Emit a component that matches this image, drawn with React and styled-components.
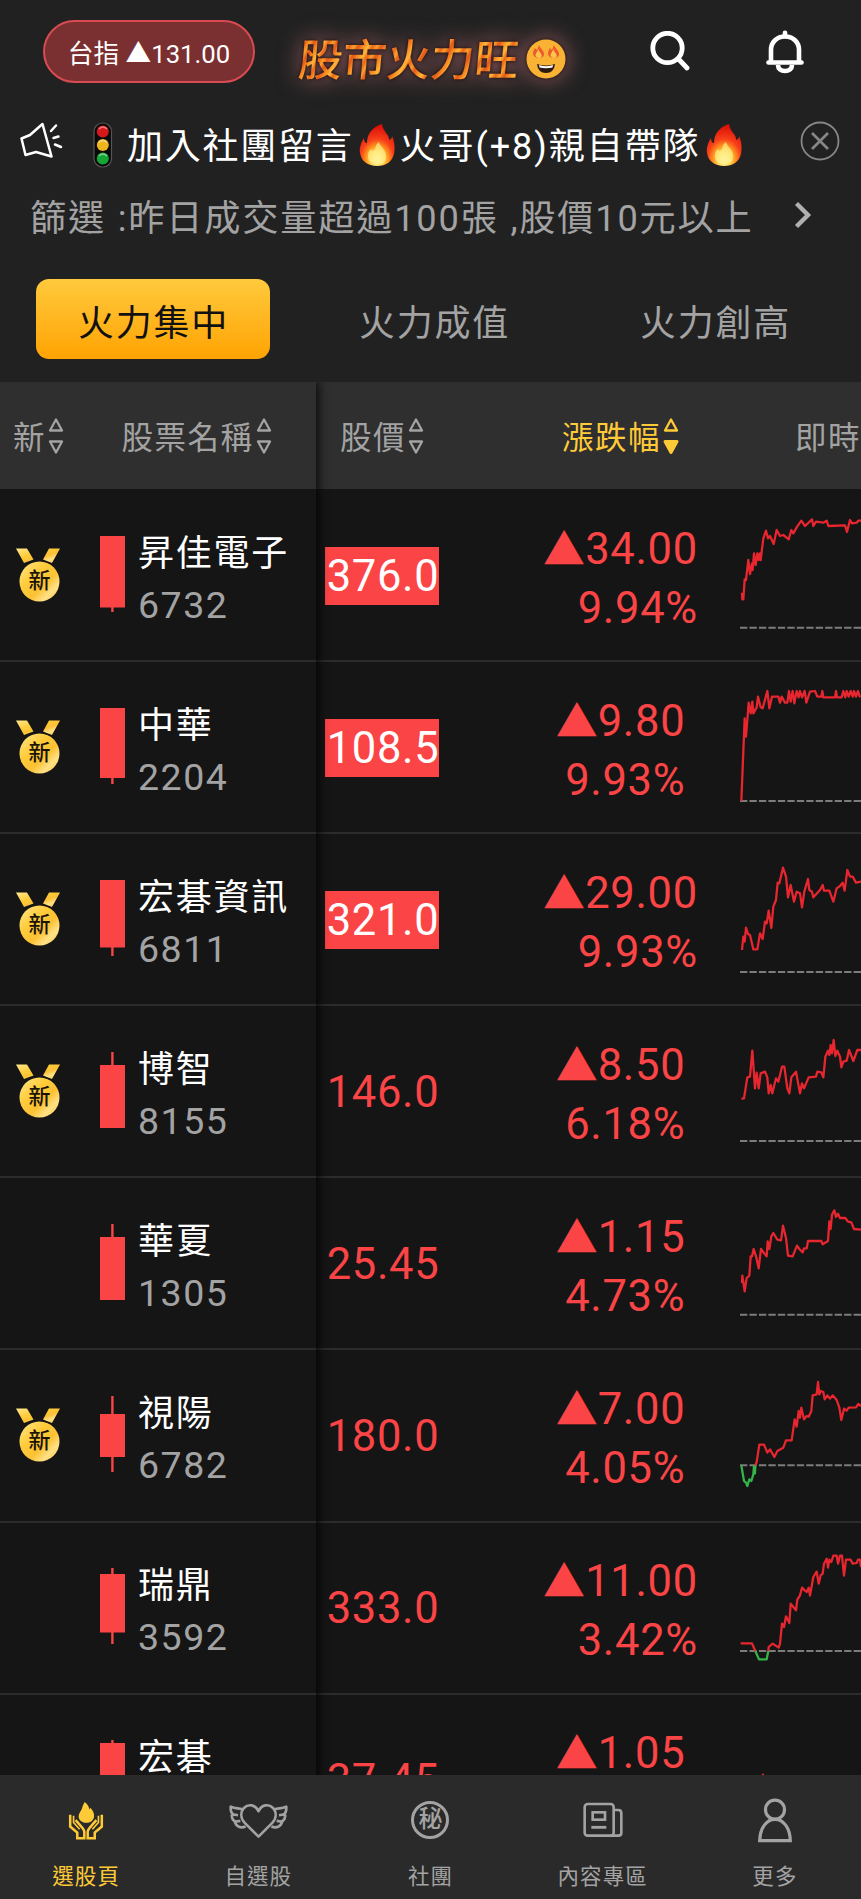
import React from 'react';
import styled, { createGlobalStyle } from 'styled-components';

const RED = '#fb4445';
const YELLOW = '#ffca38';
const GREY = '#a3a3a3';

const GlobalStyle = createGlobalStyle`
  * {
    box-sizing: border-box;
  }
  body {
    margin: 0;
    background: #151515;
    color: #fff;
    font-family: Roboto, 'Noto Sans CJK TC', sans-serif;
  }
`;

// spark lines use a 363 x 516 canvas per row
const stocks = [
  {
    name: '昇佳電子',
    code: '6732',
    price: '376.0',
    change: '34.00',
    percent: '9.94%',
    isNew: true,
    limitUp: true,
    candle: { top: 0, bottom: 71.5, high: 0, low: 76 },
    base: 413,
    up: [
      '6,308 7,328 10,328 14,268 18,270 25,210 30,252 36,220 38,240 42,190 47,225 52,190 56,210 60,190 62,210 70,145 78,122 84,145 90,138 101,162 110,120 120,138 130,135 146,148 154,120 160,130 170,112 184,92 195,108 216,88 220,108 228,95 250,98 260,92 265,108 315,106 321,126 330,90 336,100 350,98 355,92 363,92',
    ],
  },
  {
    name: '中華',
    code: '2204',
    price: '108.5',
    change: '9.80',
    percent: '9.93%',
    isNew: true,
    limitUp: true,
    candle: { top: 0, bottom: 70, high: 0, low: 76 },
    base: 417,
    up: [
      '4,417 14,169 18,224 26,122 32,154 37,119 40,154 50,136 54,104 62,136 68,139 82,87 88,139 96,104 115,104 120,122 125,104 135,122 142,122 147,87 152,119 158,87 163,124 170,87 176,106 180,87 186,106 194,87 199,122 210,89 225,87 232,104 244,104 247,87 250,106 285,106 288,87 291,106 305,106 310,87 316,106 320,87 326,104 332,87 338,104 342,87 348,104 354,87 360,106',
    ],
  },
  {
    name: '宏碁資訊',
    code: '6811',
    price: '321.0',
    change: '29.00',
    percent: '9.93%',
    isNew: true,
    limitUp: true,
    candle: { top: 0, bottom: 67.5, high: 0, low: 76 },
    base: 414,
    up: [
      '6,348 10,308 14,323 18,281 24,300 30,303 40,346 52,346 60,298 68,315 75,263 80,268 86,230 94,282 100,218 108,198 113,146 118,148 129,101 138,128 144,190 152,153 162,203 170,173 180,178 186,220 193,173 204,135 208,168 216,173 220,190 240,168 248,153 252,170 268,170 280,203 290,163 300,156 308,146 314,170 322,108 330,128 338,128 348,146 363,143',
    ],
  },
  {
    name: '博智',
    code: '8155',
    price: '146.0',
    change: '8.50',
    percent: '6.18%',
    isNew: true,
    candle: { top: 13, bottom: 76, high: 0, low: 76 },
    base: 405,
    up: [
      '4,278 12,277 22,214 30,212 37,134 45,247 50,200 56,247 62,202 75,197 82,214 86,262 92,237 97,262 108,217 115,227 126,182 133,182 142,247 148,262 154,214 168,197 180,262 186,232 192,247 206,214 228,212 232,197 244,199 250,214 256,152 264,134 268,147 272,117 276,142 281,102 286,150 292,134 300,152 304,184 310,167 320,164 327,132 340,165 352,132 363,132',
    ],
  },
  {
    name: '華夏',
    code: '1305',
    price: '25.45',
    change: '1.15',
    percent: '4.73%',
    candle: { top: 13, bottom: 76, high: 0, low: 76 },
    base: 410,
    up: [
      '6,315 7,293 14,340 20,300 28,293 32,235 36,235 41,213 48,235 56,271 63,213 72,225 80,235 83,190 88,213 94,175 100,165 112,185 123,187 129,143 138,180 144,233 158,235 171,203 178,213 188,223 192,211 200,211 204,189 244,189 248,199 264,189 268,130 272,153 276,110 283,97 288,117 294,107 300,120 316,120 324,131 334,133 342,153 363,155',
    ],
  },
  {
    name: '視陽',
    code: '6782',
    price: '180.0',
    change: '7.00',
    percent: '4.05%',
    isNew: true,
    candle: { top: 18, bottom: 61, high: 0, low: 76 },
    base: 346,
    down: '4,346 12,393 18,398 22,408 28,388 34,393 40,373 42,348 45,370 46,346',
    up: [
      '46,346 50,336 58,284 72,284 82,308 90,298 103,321 112,303 130,293 138,271 155,271 164,208 170,230 176,183 180,203 184,173 192,208 200,198 206,200 214,183 218,136 230,133 234,96 238,133 242,123 250,126 254,148 262,136 270,146 278,136 290,150 298,173 304,210 312,176 320,182 326,173 348,172 355,162 363,168',
    ],
  },
  {
    name: '瑞鼎',
    code: '3592',
    price: '333.0',
    change: '11.00',
    percent: '3.42%',
    candle: { top: 6, bottom: 64.5, high: 0, low: 76 },
    base: 384,
    down: '46,384 57,409 80,409 85,384',
    up: [
      '2,361 36,361 46,384',
      '85,384 86,372 98,362 116,374 120,362 126,302 132,312 138,280 148,300 152,242 160,252 168,262 172,230 180,217 186,194 194,202 200,207 206,194 210,218 220,162 230,146 236,182 242,157 248,152 252,122 260,107 264,134 268,110 274,117 280,98 290,98 294,122 300,98 306,98 312,158 318,110 332,110 338,122 350,120 354,110 360,110 363,132',
    ],
  },
  {
    name: '宏碁',
    code: '2353',
    price: '37.45',
    change: '1.05',
    percent: '2.88%',
    candle: { top: 3, bottom: 70, high: 0, low: 76 },
    base: 384,
    up: ['60,300 66,262 69,239 72,262 78,290'],
  },
];

const Flame = () => (
  <FlameSvg viewBox="0 0 36 44">
    <defs>
      <radialGradient id="flame" cx="50%" cy="84%" r="78%">
        <stop offset="0" stopColor="#fffbd0" />
        <stop offset="0.22" stopColor="#ffe063" />
        <stop offset="0.4" stopColor="#ff9a1f" />
        <stop offset="0.62" stopColor="#f8401a" />
        <stop offset="1" stopColor="#dc1208" />
      </radialGradient>
    </defs>
    <path
      fill="url(#flame)"
      d="M23 1C24 9 31 12 30 17C33 16 33 14 33 13C36 19 36 26 35 31C33 39 27 43 18 43C9 43 2 38 1 30C0 24 3 18 5 15C5 18 6 20 8 20C8 10 14 4 23 1Z"
    />
    <path
      fill="#fff08c"
      opacity="0.7"
      d="M20 19C21 24 27 26 27 33C27 39 24 41 18 41C12 41 9 38 9 33C9 29 10 28 12 26C13 28 15 28 16 26C17 23 17 21 20 19Z"
    />
  </FlameSvg>
);

const TrafficLight = () => (
  <svg width="20" height="46" viewBox="0 0 20 46">
    <rect x="1" y="1" width="17.5" height="44" rx="8.5" fill="#090909" stroke="#555" strokeWidth="1.2" />
    <circle cx="9.8" cy="9.5" r="6" fill="#d5181b" />
    <circle cx="9.8" cy="23" r="6" fill="#efb51f" />
    <circle cx="9.8" cy="36.5" r="6" fill="#16a636" />
    <path d="M6 7q4-4 8 0M6 20.500q4-4 8 0M6 34q4-4 8 0" stroke="#fff" strokeWidth="1.5" opacity="0.45" fill="none" />
  </svg>
);

const Megaphone = () => (
  <svg width="44" height="38" viewBox="0 0 44 38" fill="none" stroke="#fff" strokeWidth="2.500" strokeLinecap="round" strokeLinejoin="round">
    <path d="M23.500 2L32.500 34.500L17 30L6.500 33L2.500 16.500L11 13Z" />
    <path d="M32 9L37 3.500M34.500 16L39.500 14.500M36 22.500L42 25" />
  </svg>
);

const Smiley = () => (
  <svg width="40" height="40" viewBox="0 0 40 40">
    <circle cx="20" cy="20" r="19.500" fill="#f9b233" />
    <path fill="#f0592b" d="M13 6C14 10 18.500 11 18 16C17 20 8 20 7 15C7 12 8 11 9 9L10.500 11C12 10 12 8 13 6ZM28 6C29 10 33.500 11 33 16C32 20 23 20 22 15C22 12 23 11 24 9L25.500 11C27 10 27 8 28 6Z" />
    <path fill="#fbc64a" d="M12.500 10C13 14 16.500 14 15.500 18C13 20 9.500 19 9.500 15.500ZM27.500 10C28 14 31.500 14 30.500 18C28 20 24.500 19 24.500 15.500Z" />
    <path fill="#2b1a12" d="M11 25Q20 28 29 25Q28 34 20 34Q12 34 11 25Z" />
    <path fill="#fff" d="M13 26Q20 28.500 27 26L26.500 28.500Q20 30 13.500 28.500Z" />
  </svg>
);

const SearchIcon = () => (
  <svg width="40" height="41" viewBox="0 0 40 41" fill="none" stroke="#fff" strokeWidth="4.800" strokeLinecap="round">
    <circle cx="17.500" cy="17" r="14.700" />
    <path d="M28.500 28L37 37" />
  </svg>
);

const BellIcon = () => (
  <svg width="40" height="44" viewBox="0 0 40 44" fill="none" stroke="#fff" strokeWidth="4.600" strokeLinecap="round">
    <path d="M6 31V20C6 12 12 6.500 20 6.500C28 6.500 34 12 34 20V31" />
    <path d="M3.500 32.500H36.500" />
    <path d="M20 2.800V6" />
    <path d="M13 35C13 39 16 41 20 41C24 41 27 39 27 35" strokeLinecap="butt" />
  </svg>
);

const CloseIcon = () => (
  <svg width="40" height="40" viewBox="0 0 40 40" fill="none" stroke="#868686">
    <circle cx="20" cy="20" r="18.500" strokeWidth="1.800" />
    <path d="M12 12L28 28M28 12L12 28" strokeWidth="2.700" />
  </svg>
);

const Chevron = () => (
  <svg width="18" height="28" viewBox="0 0 18 28" fill="none" stroke="#b0b0b0" strokeWidth="4.400">
    <path d="M2.500 2.500L14 14L2.500 25.500" />
  </svg>
);

const SortArrows = ({ active }) => (
  <svg width="16" height="36" viewBox="0 0 16 36" fill="none" stroke="currentColor" strokeWidth="2.300" strokeLinejoin="round">
    <path d="M8 1.500L14 12.500H2Z" />
    <path d="M8 34.500L14 23.500H2Z" fill={active ? 'currentColor' : 'none'} strokeWidth={active ? 3 : 2.3} />
  </svg>
);

const Medal = () => (
  <MedalBox>
    <svg width="44" height="54" viewBox="0 0 44 54">
      <defs>
        <linearGradient id="gold" x1="0" y1="0" x2="1" y2="1">
          <stop offset="0" stopColor="#ffe890" />
          <stop offset="0.35" stopColor="#ffcd3c" />
          <stop offset="0.6" stopColor="#fcc133" />
          <stop offset="0.78" stopColor="#ffe288" />
          <stop offset="1" stopColor="#f9b927" />
        </linearGradient>
      </defs>
      <path fill="url(#gold)" d="M0 .5H11L17.500 11.500L8 15ZM44 .5H33L27 11.500L36 15Z" />
      <circle cx="23.500" cy="33.500" r="20" fill="url(#gold)" />
    </svg>
    <MedalText>新</MedalText>
  </MedalBox>
);

const Candle = ({ top, bottom, high, low }) => (
  <CandleSvg viewBox="0 0 25 77">
    <rect x="0" y={top} width="25" height={bottom - top} />
    <rect x="11.200" y={high} width="2.400" height={low - high} />
  </CandleSvg>
);

const Spark = ({ base, up, down }) => (
  <SparkSvg viewBox="0 0 363 516" fill="none" strokeLinejoin="round">
    <line x1="0" y1={base} x2="363" y2={base} stroke="#7c7c7c" strokeWidth="6" strokeDasharray="22 6.400" />
    {down && <polyline points={down} stroke="#35b44a" strokeWidth="6.800" />}
    {up.map((points) => (
      <polyline key={points} points={points} stroke="#e8262f" strokeWidth="6.800" />
    ))}
  </SparkSvg>
);

const FireHands = () => (
  <svg width="36" height="39" viewBox="0 0 106 116" fill="none" stroke="currentColor" strokeWidth="7.500">
    <path fill="currentColor" stroke="none" d="M49 3C58 10 62 17 63 25L66 20C73 28 78 36 77 46C76 58 65 65 54 65C42 65 31 57 31 46C31 36 38 30 41 22C43 15 45 10 49 3Z" />
    {['', 'translate(106 0) scale(-1 1)'].map((transform) => (
      <g key={transform} transform={transform}>
        <path d="M6 41V76L27 94V111H48V92C48 84 38 76 32 68L22 57" />
        <path d="M16 44V64L34 84" strokeWidth="5" />
      </g>
    ))}
  </svg>
);

const WingHeart = () => (
  <svg width="59" height="37" viewBox="0 0 178 112" fill="none" stroke="currentColor" strokeWidth="8" strokeLinejoin="round">
    <path d="M89 105L48 64C34 49 34 31 45 18C58 5 80 7 89 28C98 7 120 5 133 18C144 31 144 49 130 64Z" />
    {['', 'translate(178 0) scale(-1 1)'].map((transform) => (
      <path
        key={transform}
        transform={transform}
        d="M40 22C28 18 18 21 5 14C4 26 6 34 14 38L27 40M14 38C11 41 9 41 8 41C9 52 14 58 22 59L34 57M22 59C20 61 19 61 18 62C22 74 34 81 50 74"
      />
    ))}
  </svg>
);

const NewsIcon = () => (
  <svg width="40" height="36" viewBox="0 0 120 108" fill="none" stroke="currentColor" strokeWidth="7.800">
    <rect x="5" y="6" width="87" height="95" rx="9" />
    <path d="M92 24H106Q115 24 115 33V92Q115 101 106 101H84" />
    <rect x="29" y="31" width="37" height="22" strokeWidth="8" />
    <path d="M25 76H70" strokeWidth="8.500" />
  </svg>
);

const PersonIcon = () => (
  <svg width="36" height="46" viewBox="0 0 108 138" fill="none" stroke="currentColor" strokeWidth="9.500">
    <circle cx="54" cy="38" r="28.500" />
    <path d="M8 131C9 92 29 67 54 67C79 67 99 92 100 131Z" />
  </svg>
);

const navItems = [
  { label: '選股頁', icon: <FireHands />, active: true },
  { label: '自選股', icon: <WingHeart /> },
  { label: '社團', icon: null },
  { label: '內容專區', icon: <NewsIcon /> },
  { label: '更多', icon: <PersonIcon /> },
];

const App = () => (
  <Page>
    <GlobalStyle />
    <TopBar>
      <IndexPill>台指 ▲131.00</IndexPill>
      <Logo>
        <LogoText>股市火力旺</LogoText>
        <Smiley />
      </Logo>
      <Actions>
        <SearchIcon />
        <BellIcon />
      </Actions>
    </TopBar>
    <Notice>
      <Megaphone />
      <NoticeText>
        <TrafficLight />
        <span>加入社團留言</span>
        <Flame />
        <span>火哥(+8)親自帶隊</span>
        <Flame />
      </NoticeText>
      <CloseIcon />
    </Notice>
    <Filter>
      <span>篩選 :昨日成交量超過100張 ,股價10元以上</span>
      <Chevron />
    </Filter>
    <Tabs>
      <Tab $active>火力集中</Tab>
      <Tab>火力成值</Tab>
      <Tab>火力創高</Tab>
    </Tabs>
    <Table>
      <Frozen>
        <FrozenHead>
          <HeadCell>
            <span>新</span>
            <SortArrows />
          </HeadCell>
          <HeadCell>
            <span>股票名稱</span>
            <SortArrows />
          </HeadCell>
        </FrozenHead>
        {stocks.map((stock) => (
          <FrozenRow key={stock.code}>
            <MedalCell>{stock.isNew && <Medal />}</MedalCell>
            <Stock>
              <Candle {...stock.candle} />
              <div>
                <Name>{stock.name}</Name>
                <Code>{stock.code}</Code>
              </div>
            </Stock>
          </FrozenRow>
        ))}
      </Frozen>
      <Scroll>
        <ScrollHead>
          <HeadCell $left={1}>
            <span>股價</span>
            <SortArrows />
          </HeadCell>
          <HeadCell $active $left={54}>
            <span>漲跌幅</span>
            <SortArrows active />
          </HeadCell>
          <HeadCell $start $left={55}>
            <span>即時</span>
          </HeadCell>
        </ScrollHead>
        {stocks.map((stock) => (
          <ScrollRow key={stock.code}>
            <Center>
              <Price $limitUp={stock.limitUp}>{stock.price}</Price>
            </Center>
            <ChangeCell>
              <Change>
                <div>
                  <Up>▲</Up>
                  {stock.change}
                </div>
                <div>{stock.percent}</div>
              </Change>
            </ChangeCell>
            <Spark base={stock.base} up={stock.up} down={stock.down} />
          </ScrollRow>
        ))}
      </Scroll>
    </Table>
    <Nav>
      {navItems.map(({ label, icon, active }) => (
        <NavItem key={label} $active={active}>
          <NavIcon>{icon || <Seal>秘</Seal>}</NavIcon>
          <NavLabel>{label}</NavLabel>
        </NavItem>
      ))}
    </Nav>
  </Page>
);

const Page = styled.div`
  display: flex;
  flex-direction: column;
  width: 861px;
  height: 1899px;
  overflow: hidden;
  background: #212121;
`;

const TopBar = styled.header`
  display: flex;
  align-items: center;
  flex: none;
  height: 103px;
  padding: 0 56px 0 43px;
`;

const IndexPill = styled.div`
  display: flex;
  align-items: center;
  justify-content: center;
  width: 212px;
  height: 63px;
  border: 2.5px solid #d94b52;
  border-radius: 32px;
  background: #7a2f31;
  font-size: 25.7px;
  white-space: pre;
`;

const Logo = styled.div`
  display: flex;
  align-items: center;
  gap: 7px;
  margin-left: 44px;
  padding-top: 11px;
  filter: drop-shadow(0 0 2px #140a06) drop-shadow(0 0 11px rgba(180, 105, 110, 0.85));

  svg {
    position: relative;
    top: 2px;
  }
`;

const LogoText = styled.span`
  font-family: 'Noto Sans CJK TC', sans-serif;
  font-size: 44px;
  font-weight: 500;
  line-height: 50px;
  background: repeating-linear-gradient(
    115deg,
    #f6861f 0px,
    #ffb63a 5px,
    #ec641a 9px,
    #f9a02c 13px,
    #e4561a 17px,
    #f6861f 21px
  );
  background-clip: text;
  -webkit-background-clip: text;
  color: transparent;
  transform: skewX(-5deg);
`;

const Actions = styled.div`
  display: flex;
  align-items: center;
  gap: 75px;
  margin-left: auto;
`;

const Notice = styled.div`
  display: flex;
  align-items: center;
  flex: none;
  height: 84px;
  padding: 0 21px 0 19px;

  > svg {
    position: relative;
    top: -4px;
  }
`;

const NoticeText = styled.div`
  display: flex;
  align-items: center;
  flex: 1;
  margin-left: 30px;
  font-size: 36px;
  letter-spacing: 1.75px;
  white-space: nowrap;

  > span {
    padding-bottom: 5px;
  }
  > svg + span {
    margin-left: 5px;
    letter-spacing: 1.95px;
  }
  > svg:first-child + span {
    margin-left: 14px;
    letter-spacing: 1.75px;
  }
`;

const FlameSvg = styled.svg`
  width: 36px;
  height: 44px;
  margin-left: 5px;
`;

const Filter = styled.div`
  display: flex;
  align-items: center;
  justify-content: space-between;
  flex: none;
  height: 60px;
  padding: 0 49px 4px 30px;
  color: ${GREY};
  font-size: 36.2px;
  letter-spacing: 1.8px;
  word-spacing: 1px;
  white-space: nowrap;
`;

const Tabs = styled.div`
  display: grid;
  grid-template-columns: repeat(3, 281px);
  flex: none;
  height: 135px;
  padding: 32px 0 23px 12px;
`;

const Tab = styled.div`
  display: flex;
  align-items: center;
  justify-content: center;
  margin: 0 23.5px;
  padding: 1px 0 0 2px;
  border-radius: 13px;
  background: ${(props) => (props.$active ? 'linear-gradient(#ffca3d, #ffa303)' : 'none')};
  color: ${(props) => (props.$active ? '#111' : GREY)};
  font-size: 36px;
  letter-spacing: 1.75px;
`;

const Table = styled.div`
  display: flex;
  flex: 1;
  min-height: 0;
  overflow: hidden;
`;

const Frozen = styled.div`
  position: relative;
  z-index: 1;
  flex: none;
  width: 316px;
  height: 1500px;
  background: #151515;
  box-shadow: 3px 0 9px rgba(0, 0, 0, 0.75);
`;

const Scroll = styled.div`
  flex: 1;
  height: 1500px;
  background: #151515;
`;

const Head = styled.div`
  display: grid;
  height: 107px;
  margin-bottom: 1px;
  background: #2f2f2f;
`;

const FrozenHead = styled(Head)`
  grid-template-columns: 77px 239px;
`;

const ScrollHead = styled(Head)`
  grid-template-columns: 131px 293px 121px;
`;

const HeadCell = styled.div`
  display: flex;
  align-items: center;
  justify-content: ${(props) => (props.$start ? 'flex-start' : 'center')};
  gap: 2px;
  padding-left: ${(props) => props.$left || 0}px;
  overflow: hidden;
  color: ${(props) => (props.$active ? YELLOW : GREY)};
  font-size: 31.5px;
  letter-spacing: 1.5px;
  white-space: nowrap;

  span {
    padding-bottom: 1px;
  }
`;

const Row = styled.div`
  display: grid;
  height: 172.1px;
  border-bottom: 2px solid #2c2c2c;
`;

const FrozenRow = styled(Row)`
  grid-template-columns: 77px 239px;
`;

const ScrollRow = styled(Row)`
  grid-template-columns: 131px 293px 121px;
`;

const Center = styled.div`
  display: flex;
  align-items: center;
  justify-content: center;
`;

const MedalCell = styled(Center)`
  padding-right: 1px;
`;

const MedalBox = styled.div`
  position: relative;
  height: 55px;
`;

const MedalText = styled.span`
  position: absolute;
  top: 20px;
  left: 3.5px;
  width: 40px;
  color: #1a1408;
  font-size: 22px;
  font-weight: 500;
  line-height: 25px;
  text-align: center;
`;

const Stock = styled.div`
  display: flex;
  align-items: center;
  gap: 13px;
  padding-left: 23px;
`;

const CandleSvg = styled.svg`
  width: 25px;
  height: 77px;
  margin-bottom: 2px;
  fill: ${RED};
`;

const Name = styled.div`
  padding-top: 8px;
  font-size: 36px;
  line-height: 52px;
  letter-spacing: 1.75px;
  white-space: nowrap;
`;

const Code = styled.div`
  color: ${GREY};
  font-size: 37.5px;
  line-height: 51px;
  letter-spacing: 1.5px;
`;

const Price = styled.div`
  display: flex;
  align-items: center;
  justify-content: center;
  width: 114px;
  height: 58px;
  padding-left: 3px;
  background: ${(props) => (props.$limitUp ? RED : 'transparent')};
  color: ${(props) => (props.$limitUp ? '#fff' : RED)};
  font-size: 43.5px;
  letter-spacing: 0.7px;
`;

const ChangeCell = styled.div`
  display: flex;
  align-items: center;
  justify-content: center;
  padding: 5px 0 0 54px;
`;

const Change = styled.div`
  color: ${RED};
  font-size: 43.5px;
  line-height: 59px;
  letter-spacing: 0.7px;
  text-align: right;
`;

const Up = styled.span`
  position: relative;
  top: 1px;
  font-size: 42px;
  letter-spacing: 0;
`;

const SparkSvg = styled.svg`
  width: 121px;
  height: 172px;
`;

const Nav = styled.nav`
  display: grid;
  grid-template-columns: repeat(5, 1fr);
  flex: none;
  height: 124px;
  background: #2a2a2a;
`;

const NavItem = styled.div`
  display: flex;
  flex-direction: column;
  align-items: center;
  padding-top: 22px;
  color: ${(props) => (props.$active ? YELLOW : GREY)};
`;

const NavIcon = styled.div`
  display: flex;
  align-items: center;
  height: 46px;
`;

const Seal = styled.div`
  width: 38px;
  height: 38px;
  border: 3px solid currentColor;
  border-radius: 50%;
  font-size: 24px;
  font-weight: 500;
  line-height: 31px;
  text-align: center;
`;

const NavLabel = styled.div`
  margin-top: 19px;
  font-size: 21.5px;
  line-height: 30px;
  letter-spacing: 1.1px;
`;

export default App;
